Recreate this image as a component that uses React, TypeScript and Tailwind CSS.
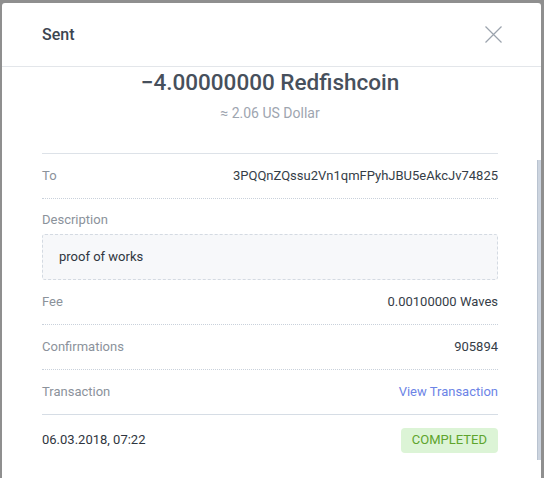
const rows = [
  { label: 'Fee', value: '0.00100000 Waves' },
  { label: 'Confirmations', value: '905894' },
]

export default function App() {
  return (
    <div
      className="w-[544px] h-[478px] bg-[#8f8f8f] pt-[3px] pl-[2px] pr-[3px] overflow-hidden"
      style={{ fontFamily: 'Roboto, "Open Sans", sans-serif' }}
    >
      <div className="relative h-full bg-white rounded-tl-[3px] rounded-tr-[3px] flex flex-col">
        {/* Header */}
        <div className="h-[64px] shrink-0 flex items-center justify-between pl-[40px] pr-[39px] border-b border-[#e3e6ea]">
          <h2 className="text-[16px] font-medium text-[#3c4550]">Sent</h2>
          <svg width="17" height="17" viewBox="0 0 17 17" className="text-[#9ba3ad]">
            <path d="M0.5 0.5L16.5 16.5M16.5 0.5L0.5 16.5" stroke="currentColor" strokeWidth="1.2" />
          </svg>
        </div>

        <div className="pl-[40px] pr-[43px]">
          {/* Amount */}
          <div className="text-center pt-[2px] pb-[30px] border-b border-[#dde2e8]">
            <div className="text-[22.5px] leading-[26px] font-medium text-[#47505c]">−4.00000000 Redfishcoin</div>
            <div className="mt-[8px] text-[14px] leading-[20px] text-[#9ea5af]">≈ 2.06 US Dollar</div>
          </div>

          {/* To */}
          <div className="h-[45px] flex items-center justify-between border-b border-dotted border-[#c9d1db] text-[13px]">
            <span className="text-[#8b929b]">To</span>
            <span className="text-[#353d47]">3PQQnZQssu2Vn1qmFPyhJBU5eAkcJv74825</span>
          </div>

          {/* Description */}
          <div className="pt-[14px]">
            <div className="text-[13px] leading-[14px] text-[#8b929b]">Description</div>
            <div className="mt-[7px] h-[46px] flex items-center pl-[16px] bg-[#f7f8fa] border border-dashed border-[#d4dae2] rounded-[3px] text-[13px] text-[#2f3640]">
              proof of works
            </div>
          </div>

          {rows.map(({ label, value }) => (
            <div key={label} className="h-[45px] flex items-center justify-between border-b border-dotted border-[#c9d1db] text-[13px]">
              <span className="text-[#8b929b]">{label}</span>
              <span className="text-[#353d47]">{value}</span>
            </div>
          ))}

          <div className="h-[45px] flex items-center justify-between border-b border-[#d6dde5] text-[13px]">
            <span className="text-[#8b929b]">Transaction</span>
            <span className="text-[#6c84e6]">View Transaction</span>
          </div>

          {/* Footer */}
          <div className="h-[50px] flex items-center justify-between text-[13px]">
            <span className="text-[#2f3640]">06.03.2018, 07:22</span>
            <span className="h-[25px] px-[11px] flex items-center rounded-[4px] bg-[#dcf4d6] text-[#5ea42d] uppercase">Completed</span>
          </div>
        </div>

        {/* scrollbar thumb */}
        <div className="absolute right-0 top-[157px] w-[4px] h-[300px] bg-[#ccd4df] border-l border-[#b9c3d0]" />
      </div>
    </div>
  )
}
